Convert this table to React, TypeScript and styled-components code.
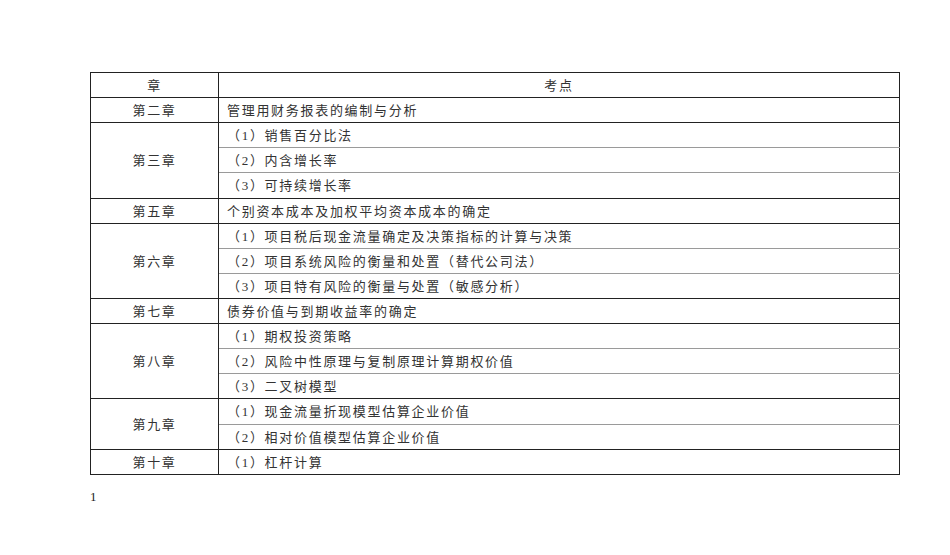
import styled, { createGlobalStyle } from 'styled-components';

const GlobalStyle = createGlobalStyle`
  html, body {
    margin: 0;
    padding: 0;
    background: #ffffff;
  }
  body {
    font-family: "Liberation Serif", "Noto Sans CJK SC", serif;
    color: #333;
  }
`;

const Page = styled.div`
  width: 950px;
  height: 555px;
  padding: 72px 0 0 90px;
  box-sizing: border-box;
`;

const Table = styled.table`
  width: 810px;
  border-collapse: collapse;
  table-layout: fixed;
  font-size: 13px;
  letter-spacing: 1.7px;
`;

const ChapterCol = styled.col`
  width: 128px;
`;

const Cell = styled.td<{ $center?: boolean }>`
  height: 22.12px;
  padding: 2px 0 0 ${(p) => (p.$center ? '0' : '8px')};
  border: 1px solid #222;
  text-align: ${(p) => (p.$center ? 'center' : 'left')};
  vertical-align: middle;
  line-height: 20px;
  white-space: nowrap;
`;

const SubCell = styled(Cell)<{ $last?: boolean; $first?: boolean }>`
  border-top: 1px solid ${(p) => (p.$first ? '#222' : '#9a9a9a')};
  border-bottom: 1px solid ${(p) => (p.$last ? '#222' : '#9a9a9a')};
`;

const PageNumber = styled.div`
  margin-top: 14px;
  font-size: 13px;
  color: #222;
`;

type Group = { chapter: string; points: string[] };

const groups: Group[] = [
  { chapter: '第二章', points: ['管理用财务报表的编制与分析'] },
  { chapter: '第三章', points: ['（1）销售百分比法', '（2）内含增长率', '（3）可持续增长率'] },
  { chapter: '第五章', points: ['个别资本成本及加权平均资本成本的确定'] },
  {
    chapter: '第六章',
    points: [
      '（1）项目税后现金流量确定及决策指标的计算与决策',
      '（2）项目系统风险的衡量和处置（替代公司法）',
      '（3）项目特有风险的衡量与处置（敏感分析）',
    ],
  },
  { chapter: '第七章', points: ['债券价值与到期收益率的确定'] },
  {
    chapter: '第八章',
    points: ['（1）期权投资策略', '（2）风险中性原理与复制原理计算期权价值', '（3）二叉树模型'],
  },
  { chapter: '第九章', points: ['（1）现金流量折现模型估算企业价值', '（2）相对价值模型估算企业价值'] },
  { chapter: '第十章', points: ['（1）杠杆计算'] },
];

export default function App() {
  return (
    <>
      <GlobalStyle />
      <Page>
        <Table>
          <colgroup>
            <ChapterCol />
            <col />
          </colgroup>
          <tbody>
            <tr>
              <Cell $center>章</Cell>
              <Cell $center>考点</Cell>
            </tr>
            {groups.map((g) =>
              g.points.map((p, i) => (
                <tr key={g.chapter + i}>
                  {i === 0 && (
                    <Cell $center rowSpan={g.points.length}>
                      {g.chapter}
                    </Cell>
                  )}
                  <SubCell $first={i === 0} $last={i === g.points.length - 1}>
                    {p}
                  </SubCell>
                </tr>
              )),
            )}
          </tbody>
        </Table>
        <PageNumber>1</PageNumber>
      </Page>
    </>
  );
}
